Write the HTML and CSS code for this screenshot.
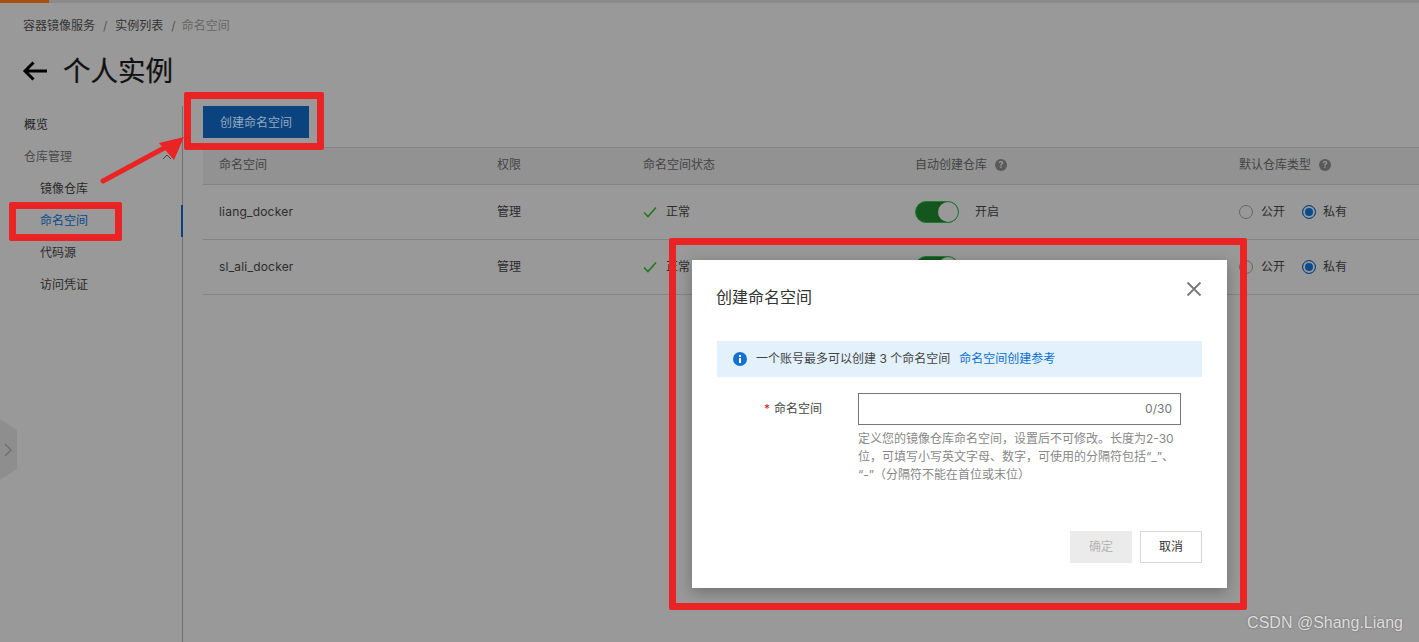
FILE: index.html
```html
<!DOCTYPE html>
<html lang="zh-CN">
<head>
<meta charset="utf-8">
<title>命名空间</title>
<link rel="stylesheet" href="styles.css">
</head>
<body>
<div class="topbar"><div class="topbar-accent"></div></div>
<nav class="crumbs"><span>容器镜像服务</span><i>/</i><span>实例列表</span><i>/</i><span class="crumb-now">命名空间</span></nav>
<header class="title">
  <svg class="back" width="26" height="20" viewBox="0 0 26 20"><path d="M25 10H3M11.500 1.500L3 10l8.500 8.500" fill="none" stroke="#000" stroke-width="3"/></svg>
  <h1>个人实例</h1>
</header>
<div class="shell">
  <aside class="side">
    <div class="side-item top">概览</div>
    <div class="side-item group">仓库管理<svg width="10" height="6" viewBox="0 0 10 6"><path d="M1 5l4-4 4 4" fill="none" stroke="#444" stroke-width="1"/></svg></div>
    <div class="side-item sub">镜像仓库</div>
    <div class="side-item sub active">命名空间</div>
    <div class="side-item sub">代码源</div>
    <div class="side-item sub">访问凭证</div>
  </aside>
  <main class="main">
    <button class="primary">创建命名空间</button>
    <div class="row head">
      <div class="c1">命名空间</div>
      <div class="c2">权限</div>
      <div class="c3">命名空间状态</div>
      <div class="c4">自动创建仓库<span class="help">?</span></div>
      <div class="c5">默认仓库类型<span class="help">?</span></div>
    </div>
    <div class="row">
      <div class="c1 latin">liang_docker</div>
      <div class="c2">管理</div>
      <div class="c3"><svg class="check" width="14" height="12" viewBox="0 0 14 12"><path d="M1 6.500l4 4L13 1.500" fill="none" stroke="#1f7a1f" stroke-width="1.600"/></svg>正常</div>
      <div class="c4"><span class="switch"><b></b></span>开启</div>
      <div class="c5"><span class="radio"></span>公开<span class="radio on"></span>私有</div>
    </div>
    <div class="row">
      <div class="c1 latin">sl_ali_docker</div>
      <div class="c2">管理</div>
      <div class="c3"><svg class="check" width="14" height="12" viewBox="0 0 14 12"><path d="M1 6.500l4 4L13 1.500" fill="none" stroke="#1f7a1f" stroke-width="1.600"/></svg>正常</div>
      <div class="c4"><span class="switch"><b></b></span>开启</div>
      <div class="c5"><span class="radio"></span>公开<span class="radio on"></span>私有</div>
    </div>
  </main>
</div>
<div class="handle"><svg width="8" height="14" viewBox="0 0 8 14"><path d="M1 1l6 6-6 6" fill="none" stroke="#6f6f6f" stroke-width="1.400"/></svg></div>

<section class="dialog">
  <div class="dialog-head">
    <h2>创建命名空间</h2>
    <svg width="16" height="16" viewBox="0 0 16 16"><path d="M1.500 1.500l13 13M14.500 1.500l-13 13" fill="none" stroke="#777" stroke-width="1.800"/></svg>
  </div>
  <div class="notice">
    <svg width="14" height="14" viewBox="0 0 14 14"><circle cx="7" cy="7" r="7" fill="#1670d2"/><rect x="6" y="6" width="2" height="5" fill="#fff"/><rect x="6" y="3" width="2" height="2" fill="#fff"/></svg>
    <span>一个账号最多可以创建 3 个命名空间</span><a>命名空间创建参考</a>
  </div>
  <div class="field">
    <label><em>*</em>命名空间</label>
    <div class="control">
      <div class="input">0/30</div>
      <p>定义您的镜像仓库命名空间，设置后不可修改。长度为2-30位，可填写小写英文字母、数字，可使用的分隔符包括“_”、“-”（分隔符不能在首位或末位）</p>
    </div>
  </div>
  <div class="dialog-foot">
    <button class="ok">确定</button>
    <button class="cancel">取消</button>
  </div>
</section>

<div class="mark mark-button"></div>
<div class="mark mark-nav"></div>
<div class="mark mark-dialog"></div>
<svg class="arrow" width="110" height="70" viewBox="0 0 110 70"><path d="M5 59L68 25" fill="none" stroke="#ea2424" stroke-width="5" stroke-linecap="round"/><path d="M86 15L61 21 76 38Z" fill="#ea2424"/></svg>
<div class="watermark">CSDN @Shang.Liang</div>
</body>
</html>
```
FILE: styles.css
```css
* { box-sizing: border-box; }
html, body { margin: 0; height: 642px; overflow: hidden; }
body {
  width: 1419px;
  position: relative;
  background: #999;
  color: #2c2c2c;
  font: 12px/18px Inter, "Noto Sans CJK SC", sans-serif;
  text-spacing-trim: space-all;
}
.topbar { height: 3px; background: #8a8a8a; }
.topbar-accent { width: 49px; height: 3px; background: #a8500f; }
.crumbs { display: flex; height: 18px; margin: 14px 0 0 23px; color: #333; }
.crumbs i { font-style: normal; margin: 0 8px; color: #555; }
.crumb-now { color: #666; margin-left: -2px; }
.title { display: flex; align-items: center; height: 40px; margin: 16px 0 0 22px; }
.back { margin-right: 15px; }
.title h1 { margin: 0; font-size: 27.500px; line-height: 40px; font-weight: 400; color: #111; -webkit-text-stroke: 0.2px #111; }
.shell { display: flex; margin-top: 15px; height: 536px; }
.side { width: 183px; flex: none; border-right: 1px solid #6f6f6f; padding-top: 3px; }
.side-item { height: 32px; line-height: 32px; position: relative; }
.top { padding-left: 24px; color: #222; }
.group { padding-left: 24px; color: #4a4a4a; display: flex; align-items: center; justify-content: space-between; padding-right: 10px; }
.sub { padding-left: 40px; color: #2a2a2a; }
.active { color: #0a4a8c; }
.active::after { content: ""; position: absolute; right: -1px; top: 0; width: 2px; height: 32px; background: #0a437e; }
.main { flex: 1; padding-left: 20px; }
.primary { display: block; width: 106px; height: 32px; border: 0; padding: 2px 0 0; background: #0a437e; color: #93a9c2; font: inherit; }
.row { display: flex; align-items: center; height: 55px; border-bottom: 1px solid #848484; }
.head { height: 38px; margin-top: 9px; padding-bottom: 2px; background: #929292; border-top: 1px solid #848484; color: #444; }
.row > div { flex: none; padding-left: 16px; display: flex; align-items: center; height: 18px; }
.c1 { width: 278px; }
.c2 { width: 146px; }
.c3 { width: 272px; }
.c4 { width: 324px; }
.c5 { width: 196px; }
.latin { letter-spacing: 0.2px; }
.help { width: 12px; height: 12px; border-radius: 50%; margin-left: 8px; background: #5a5a5a; color: #999; font-size: 9px; line-height: 12px; text-align: center; font-weight: 700; }
.check { margin-right: 9px; }
.switch { width: 44px; height: 22px; margin-right: 16px; border-radius: 11px; background: #15561f; position: relative; display: block; border: 1px solid #1f7a2f; }
.switch b { position: absolute; right: 0; top: 0; width: 20px; height: 20px; border-radius: 50%; background: #999; }
.radio { width: 14px; height: 14px; margin-right: 8px; border-radius: 50%; border: 1px solid #666; display: block; }
.radio.on { margin-left: 17px; margin-right: 7px; border-color: #0a437e; background: #0a4a8c; box-shadow: inset 0 0 0 2px #999; }
.handle { position: absolute; left: 0; top: 419px; width: 17px; height: 61px; background: #8e8e8e; clip-path: polygon(0 0, 100% 18%, 100% 82%, 0 100%); display: flex; align-items: center; padding-left: 4px; }
.dialog { position: absolute; left: 692px; top: 260px; width: 535px; height: 328px; background: #fff; padding: 0 25px; box-shadow: 0 4px 14px rgba(0, 0, 0, .28); }
.dialog-head { display: flex; justify-content: space-between; align-items: center; height: 32px; margin: 21px 0 0; }
.dialog-head h2 { margin: 0 0 0 -1px; font-size: 16px; line-height: 32px; font-weight: 400; color: #333; }
.dialog-head svg { margin-top: -17px; }
.notice { display: flex; align-items: center; height: 36px; margin-top: 28px; padding-left: 16px; background: #e3f1fd; color: #444; }
.notice svg { margin-right: 9px; }
.notice a { margin-left: 9px; color: #0a6fd0; }
.field { display: flex; margin-top: 16px; }
.field label { width: 141px; padding: 7px 0 0 47px; flex: none; color: #444; }
.field em { color: #d22; font-style: normal; margin-right: 4px; }
.control { width: 323px; }
.input { height: 32px; border: 1px solid #777; padding: 6px 8px 0 0; text-align: right; color: #777; }
.control p { margin: 5px 0 0; color: #888; line-height: 18px; word-break: break-all; }
.dialog-foot { position: absolute; right: 25px; bottom: 25px; display: flex; gap: 8px; }
.dialog-foot button { width: 62px; height: 32px; font: inherit; padding: 0; }
.ok { border: 0; background: #ebebeb; color: #b5b5b5; }
.cancel { border: 1px solid #d6d6d6; background: #fff; color: #333; }
.mark { position: absolute; border: 7px solid #ea2424; border-radius: 2px; }
.mark-button { left: 184px; top: 92px; width: 140px; height: 58px; }
.mark-nav { left: 9px; top: 202px; width: 113px; height: 39px; }
.mark-dialog { left: 669px; top: 238px; width: 578px; height: 372px; }
.arrow { position: absolute; left: 98px; top: 122px; }
.watermark { position: absolute; right: 16px; top: 612px; font: 16px/22px "Liberation Sans", sans-serif; color: #ddd; text-shadow: 0 0 2px #666; }
```
